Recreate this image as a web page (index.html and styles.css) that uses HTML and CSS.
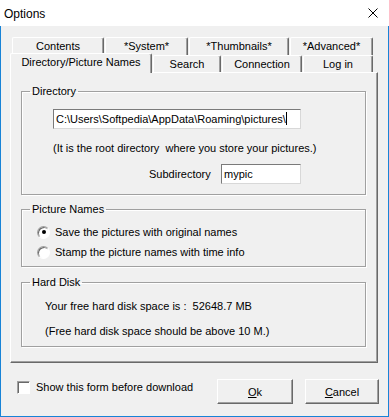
FILE: index.html
```html
<!DOCTYPE html>
<html lang="en">
<head>
  <meta charset="UTF-8" />
  <meta name="viewport" content="width=device-width, initial-scale=1.0" />
  <title>Options</title>
  <link rel="stylesheet" href="styles.css">
</head>
<body>
  <div class="window">
    <!-- title bar -->
    <div class="titlebar">
      <span class="title">Options</span>
      <svg class="close" width="10" height="10" viewBox="0 0 10 10">
        <path d="M0.5 0.5 L9.5 9.5 M9.5 0.5 L0.5 9.5" stroke="#000" stroke-width="1" fill="none" />
      </svg>
    </div>

    <div class="client">
      <!-- tab strip, two rows -->
      <div class="tabs">
        <div class="tab-row back">
          <div class="tab t-contents">Contents</div>
          <div class="tab t-system">*System*</div>
          <div class="tab t-thumbs">*Thumbnails*</div>
          <div class="tab t-advanced">*Advanced*</div>
        </div>
        <div class="tab-row front">
          <div class="tab t-directory selected">Directory/Picture Names</div>
          <div class="tab t-search">Search</div>
          <div class="tab t-connection">Connection</div>
          <div class="tab t-login">Log in</div>
        </div>
      </div>

      <div class="panel">
        <fieldset class="group group-dir">
          <legend>Directory</legend>
          <div class="edit edit-path">C:\Users\Softpedia\AppData\Roaming\pictures\<span class="caret"></span></div>
          <p class="note">(It is the root directory&nbsp; where you store your pictures.)</p>
          <div class="subdir-row">
            <label class="subdir-label" for="subdir">Subdirectory</label>
            <input class="edit edit-sub" id="subdir" type="text" value="mypic" />
          </div>
        </fieldset>

        <fieldset class="group group-names">
          <legend>Picture Names</legend>
          <label class="radio-row">
            <input class="radio" type="radio" name="names" checked />
            <span>Save the pictures with original names</span>
          </label>
          <label class="radio-row">
            <input class="radio" type="radio" name="names" />
            <span>Stamp the picture names with time info</span>
          </label>
        </fieldset>

        <fieldset class="group group-disk">
          <legend>Hard Disk</legend>
          <p class="disk-line first">Your free hard disk space is :&nbsp; 52648.7 MB</p>
          <p class="disk-line">(Free hard disk space should be above 10 M.)</p>
        </fieldset>
      </div>

      <div class="footer">
        <label class="check-row">
          <input class="check" type="checkbox" />
          <span>Show this form before download</span>
        </label>
        <button class="btn btn-ok"><u>O</u>k</button>
        <button class="btn btn-cancel"><u>C</u>ancel</button>
      </div>
    </div>
  </div>
</body>
</html>
```

FILE: styles.css
```css
body {
  margin: 0;
  padding: 0;
  background-color: #f0f0f0;
  font-family: "Liberation Sans", Arial, sans-serif;
  font-size: 11px;
  line-height: 13px;
  color: #000;
}
.window {
  width: 389px;
  height: 417px;
  background-color: #f0f0f0;
}
.titlebar {
  height: 26px;
  background-color: #fff;
  display: flex;
  align-items: center;
  justify-content: space-between;
  padding: 0 11px 0 4px;
  box-sizing: border-box;
}
.title {
  font-size: 12px;
  line-height: 16px;
  padding-top: 1px;
}
.close {
  display: block;
}
.client {
  height: 391px;
  box-sizing: border-box;
  border: 1px solid #1883d7;
  border-top: none;
  padding: 11px 0 0 9px;
}

/* tabs */
.tabs {
  height: 35px;
}
.tab-row {
  display: flex;
  gap: 1px;
}
.tab-row.back {
  height: 18px;
  padding-left: 2px;
}
.tab-row.front {
  height: 17px;
}
.tab {
  box-sizing: border-box;
  height: 100%;
  text-align: center;
  padding-top: 2px;
  background-color: #f0f0f0;
  border-top: 1px solid #fff;
  border-left: 1px solid #fff;
  border-right: 1px solid #696969;
  border-radius: 2px 2px 0 0;
  box-shadow: inset -1px 0 0 #a0a0a0;
  white-space: nowrap;
}
.tab.selected {
  position: relative;
  z-index: 2;
  height: 20px;
  margin-top: -2px;
}
.t-contents { width: 92px; }
.t-system { width: 83px; }
.t-thumbs { width: 100px; }
.t-advanced { width: 83px; }
.t-directory { width: 142px; }
.t-search { width: 68px; }
.t-connection { width: 80px; }
.t-login { width: 70px; }

/* page panel */
.panel {
  position: relative;
  z-index: 1;
  width: 368px;
  height: 291px;
  box-sizing: border-box;
  border: 1px solid;
  border-color: #fff #696969 #696969 #fff;
  box-shadow: inset -1px -1px 0 #a0a0a0;
  padding-top: 12px;
}
.group {
  margin: 0 11px 0 10px;
  padding: 0;
  border: 1px solid #a0a0a0;
  box-shadow: 1px 1px 0 #fff, inset 1px 1px 0 #fff;
  min-width: 0;
}
.group legend {
  margin-left: 8px;
  padding: 0 2px;
  line-height: 13px;
}
.group-dir {
  padding-bottom: 10px;
}
.group-names {
  margin-top: 8px;
  padding: 6px 0 4px;
}
.group-disk {
  margin-top: 9px;
  padding-bottom: 8px;
}
.edit {
  display: block;
  box-sizing: border-box;
  height: 20px;
  margin: 0;
  padding: 0 2px;
  font-family: "Liberation Sans", Arial, sans-serif;
  font-size: 11px;
  line-height: 18px;
  color: #000;
  background-color: #fff;
  border: 1px solid;
  border-color: #7a7a7a #d8d8d8 #d8d8d8 #7a7a7a;
  outline: none;
  white-space: nowrap;
}
.edit-path {
  width: 248px;
  margin: 11px 0 0 31px;
}
.caret {
  display: inline-block;
  width: 1px;
  height: 13px;
  background-color: #000;
  vertical-align: -2px;
}
.note {
  margin: 13px 0 0 31px;
}
.subdir-row {
  display: flex;
  align-items: center;
  margin: 9px 0 0 127px;
}
.subdir-label {
  width: 72px;
}
.edit-sub {
  width: 80px;
}
.radio-row {
  display: flex;
  align-items: center;
  gap: 5px;
  height: 20px;
  padding-left: 15px;
}
.radio {
  appearance: none;
  -webkit-appearance: none;
  width: 13px;
  height: 13px;
  margin: 0;
  box-sizing: border-box;
  border-radius: 50%;
  border: 1px solid;
  border-color: #a0a0a0 #fff #fff #a0a0a0;
  background-color: #fff;
  box-shadow: inset 1px 1px 0 #696969;
  display: flex;
  align-items: center;
  justify-content: center;
}
.radio:checked::after {
  content: "";
  width: 4px;
  height: 4px;
  border-radius: 50%;
  background-color: #000;
}
.disk-line {
  margin: 12px 0 0 23px;
}
.disk-line.first {
  margin-top: 11px;
}

/* bottom row */
.footer {
  display: flex;
  align-items: flex-start;
  padding: 16px 9px 0 0;
}
.check-row {
  display: flex;
  align-items: center;
  gap: 6px;
  margin: 2px 0 0 7px;
}
.check {
  appearance: none;
  -webkit-appearance: none;
  width: 13px;
  height: 13px;
  margin: 0;
  box-sizing: border-box;
  border: 1px solid;
  border-color: #a0a0a0 #fff #fff #a0a0a0;
  background-color: #fff;
  box-shadow: inset 1px 1px 0 #696969;
}
.btn {
  box-sizing: border-box;
  height: 25px;
  margin: 0;
  padding: 1px 0 0;
  font-family: "Liberation Sans", Arial, sans-serif;
  font-size: 11px;
  color: #000;
  background-color: #f0f0f0;
  border: 1px solid;
  border-color: #fff #696969 #696969 #fff;
  box-shadow: inset -1px -1px 0 #a0a0a0;
  border-radius: 0;
}
.btn-ok {
  width: 76px;
  margin-left: auto;
}
.btn-cancel {
  width: 74px;
  margin-left: 12px;
}
```
